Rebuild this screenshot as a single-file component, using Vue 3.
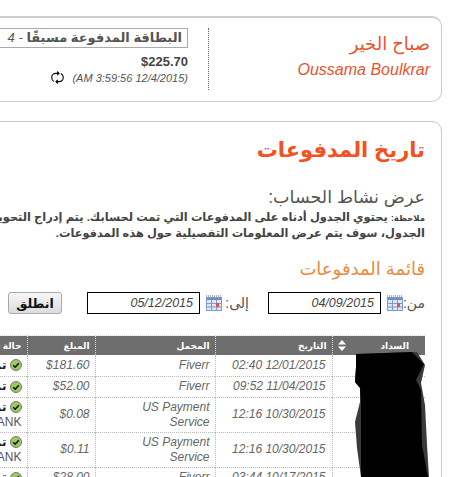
<template>
  <div class="page">
    <div class="card top-card">
      <div class="greeting">
        <div class="hello">صباح الخير</div>
        <div class="name">Oussama Boulkrar</div>
      </div>
      <div class="wallet">
        <div class="wallet-select">البطاقة المدفوعة مسبقًا<span class="idx"> - 4</span></div>
        <div class="balance" dir="ltr">$225.70</div>
        <div class="stamp">
          <span class="stamp-text" dir="ltr">(AM 3:59:56 12/4/2015)</span>
          <svg class="refresh" width="13" height="15" viewBox="0 0 13 15" fill="none" stroke="#000" stroke-width="1.1">
            <path d="M3 11.5C1.3 10.5.7 8.9.7 7.4.7 5 2.6 3.4 5 3.4h3" />
            <path d="M10 3.5c1.7 1 2.3 2.6 2.3 4.1 0 2.4-1.9 4-4.3 4H5" />
            <path d="M6.2.8l2.6 2.6-2.6 2.4zM6.8 9.2l-2.6 2.4 2.6 2.6z" fill="#000" stroke="none" />
          </svg>
        </div>
      </div>
    </div>

    <div class="card main-card">
      <h1 class="title">تاريخ المدفوعات</h1>
      <h2 class="subtitle">عرض نشاط الحساب:</h2>
      <p class="note">
        <span class="note-label">ملاحظة:</span> يحتوي الجدول أدناه على المدفوعات التي تمت لحسابك. يتم إدراج التحويلات في هذا<br />
        الجدول، سوف يتم عرض المعلومات التفصيلية حول هذه المدفوعات.
      </p>
      <h3 class="section">قائمة المدفوعات</h3>

      <div class="filters">
        <label class="lbl lbl-from">من:</label>
        <svg class="cal" width="16" height="16" viewBox="0 0 16 16">
          <rect x=".5" y="2.5" width="15" height="13" fill="#dbe6f6" stroke="#7f9bc6" />
          <path d="M0 1h16" stroke="#666" stroke-dasharray="1 1" />
          <path d="M1 3h14v2H1z" fill="#6f8fc4" />
          <path d="M5.5 5v10M10.5 5v10M1 8.5h14M1 12h14" stroke="#7f9bc6" />
          <rect x="10" y="8" width="3" height="4" fill="#d9574a" />
        </svg>
        <input class="date" value="04/09/2015" />
        <label class="lbl lbl-to">إلى:</label>
        <svg class="cal" width="16" height="16" viewBox="0 0 16 16">
          <rect x=".5" y="2.5" width="15" height="13" fill="#dbe6f6" stroke="#7f9bc6" />
          <path d="M0 1h16" stroke="#666" stroke-dasharray="1 1" />
          <path d="M1 3h14v2H1z" fill="#6f8fc4" />
          <path d="M5.5 5v10M10.5 5v10M1 8.5h14M1 12h14" stroke="#7f9bc6" />
          <rect x="10" y="8" width="3" height="4" fill="#d9574a" />
        </svg>
        <input class="date" value="05/12/2015" />
        <button class="go">انطلق</button>
      </div>

      <table class="grid">
        <colgroup>
          <col style="width: 93px" />
          <col style="width: 117px" />
          <col style="width: 120px" />
          <col style="width: 68px" />
          <col style="width: 100px" />
        </colgroup>
        <thead>
          <tr>
            <th>
              <div class="sort-head">
                <span>السداد</span>
                <svg width="8" height="11" viewBox="0 0 8 11" fill="#fff"><path d="M4 0l4 4.5H0zM4 11L0 6.5h8z" /></svg>
              </div>
            </th>
            <th>التاريخ</th>
            <th>المحمل</th>
            <th>المبلغ</th>
            <th>حالة الدفع</th>
          </tr>
        </thead>
        <tbody>
          <tr v-for="row in rows" :key="row.date + row.amount" :style="{ height: row.h + 'px' }">
            <td></td>
            <td dir="ltr" class="num when">{{ row.date }}</td>
            <td dir="ltr" class="num">{{ row.merchant }}</td>
            <td dir="ltr" class="num">{{ row.amount }}</td>
            <td class="status">
              <div class="status-line">
                <svg class="ok" width="12" height="12" viewBox="0 0 12 12">
                  <circle cx="6" cy="6" r="5.5" fill="#9ccb5c" stroke="#777" />
                  <path d="M3.2 6.2l2 2 3.6-4" fill="none" stroke="#111" stroke-width="1.6" />
                </svg>
                <b>تم التحويل</b>
              </div>
              <div v-if="row.bank" class="bank">TO BANK</div>
            </td>
          </tr>
        </tbody>
      </table>
    </div>

    <svg class="scribble" width="90" height="132" viewBox="0 0 90 132">
      <path d="M16 9L77 7L85 20L81 38L85 60L87 100L89 132H21L17 103L15 77L20 57L20 43L15 37L16 22Z" fill="#3a3a3a" />
      <path d="M16 9L72 7L84 19L76 35L81 45L82 100L88 132H21L21 57L20 43L15 37L16 22Z" fill="#000" />
    </svg>
  </div>
</template>

<script setup>
const rows = [
  { date: '02:40 12/01/2015', merchant: 'Fiverr', amount: '$181.60', h: 21 },
  { date: '09:52 11/04/2015', merchant: 'Fiverr', amount: '$52.00', h: 21 },
  { date: '12:16 10/30/2015', merchant: 'US Payment Service', amount: '$0.08', h: 35, bank: true },
  { date: '12:16 10/30/2015', merchant: 'US Payment Service', amount: '$0.11', h: 35, bank: true },
  { date: '03:44 10/17/2015', merchant: 'Fiverr', amount: '$28.00', h: 21 }
]
</script>

<style>
html, body { margin: 0; background: #fff; overflow: hidden; }
</style>

<style scoped>
.page {
  position: relative;
  width: 450px;
  height: 477px;
  overflow: hidden;
  direction: rtl;
  box-sizing: border-box;
  padding: 16px 8px 0 0;
  font-family: "Liberation Sans", "DejaVu Sans", sans-serif;
  color: #555;
}
.card {
  width: 640px;
  box-sizing: border-box;
  background: #fff;
  border: 1px solid #ccc;
  border-radius: 10px;
}
.top-card {
  height: 86px;
  border-top-width: 2px;
  display: flex;
  padding: 10px 0 0;
}
.greeting {
  width: 233px;
  box-sizing: border-box;
  height: 62px;
  border-left: 1px dotted #666;
  padding: 3px 11px 0 0;
}
.hello { color: #e8552d; font-size: 18px; line-height: 26px; }
.name { color: #e8552d; font-size: 16px; line-height: 22px; font-style: italic; direction: ltr; text-align: right; margin-top: 2px; }
.wallet { padding-right: 20px; }
.wallet-select {
  width: 320px;
  height: 20px;
  box-sizing: border-box;
  border: 1px solid #aaa;
  font-size: 13px;
  font-weight: bold;
  line-height: 18px;
  padding-right: 5px;
  color: #555;
}
.idx { font-weight: normal; font-style: italic; }
.balance { font-size: 13px; font-weight: bold; color: #444; line-height: 16px; margin-top: 6px; text-align: right; }
.stamp { display: flex; align-items: center; gap: 8px; height: 15px; margin-top: 0; }
.stamp-text { font-size: 11px; font-style: italic; color: #555; }
.refresh { flex: none; }

.main-card {
  height: 420px;
  margin-top: 19px;
  padding: 0 16px 0 15px;
}
.title { margin: 12px 0 0; font-size: 21px; line-height: 32px; color: #f4511e; font-weight: bold; }
.subtitle { margin: 19px 0 0; font-size: 17.5px; line-height: 24px; color: #555; font-weight: normal; }
.note { margin: 1px 0 0; font-size: 11.4px; line-height: 15px; font-weight: bold; color: #444; white-space: nowrap; }
.note-label { font-size: 8.5px; }
.section { margin: 15px 0 0; font-size: 18px; line-height: 26px; color: #ee8a3c; font-weight: normal; }
.filters { display: flex; align-items: center; height: 22px; margin-top: 10px; }
.lbl { font-size: 14px; color: #555; flex: none; }
.lbl-from { width: 22px; }
.lbl-to { width: 27px; margin-right: 19px; }
.cal { flex: none; margin: 0 0 0 6px; }
.date {
  width: 113px;
  height: 22px;
  box-sizing: border-box;
  flex: none;
  border: 1px solid #000;
  padding: 0 6px;
  font: italic 12.5px "Liberation Sans", sans-serif;
  color: #444;
  direction: ltr;
  text-align: right;
  background: #fff;
}
.go {
  width: 54px;
  height: 22px;
  flex: none;
  margin-right: 25px;
  padding: 0;
  border: 1px solid #aaa;
  border-radius: 3px;
  background: linear-gradient(#f7f7f7, #dcdcdc);
  font: bold 12.5px "Liberation Sans", "DejaVu Sans", sans-serif;
  color: #111;
}
.grid {
  width: 498px;
  margin-top: 21px;
  border-collapse: collapse;
  table-layout: fixed;
  font-size: 12px;
  color: #666;
}
.grid th {
  height: 19px;
  padding: 0 5px;
  background: #6e6e6e;
  color: #fff;
  font-size: 9px;
  font-weight: bold;
  text-align: right;
  border-top: 1px dotted #ddd;
  border-left: 1px dotted #ddd;
  white-space: nowrap;
}
.sort-head { display: flex; justify-content: space-between; padding-right: 11px; align-items: center; }
.grid td {
  padding: 0 5px;
  border-bottom: 1px dotted #bbb;
  border-left: 1px dotted #bbb;
  vertical-align: middle;
}
.grid td.when { padding-right: 6px; }
.num { font-style: italic; text-align: right; line-height: 15px; }
.status { text-align: right; white-space: nowrap; color: #555; line-height: 15px; }
.status-line { display: flex; align-items: center; gap: 3px; }
.status-line b { color: #222; font-size: 12px; }
.ok { flex: none; }
.bank { font-size: 12px; direction: ltr; text-align: right; }

.scribble { position: absolute; left: 340px; top: 345px; }
</style>
